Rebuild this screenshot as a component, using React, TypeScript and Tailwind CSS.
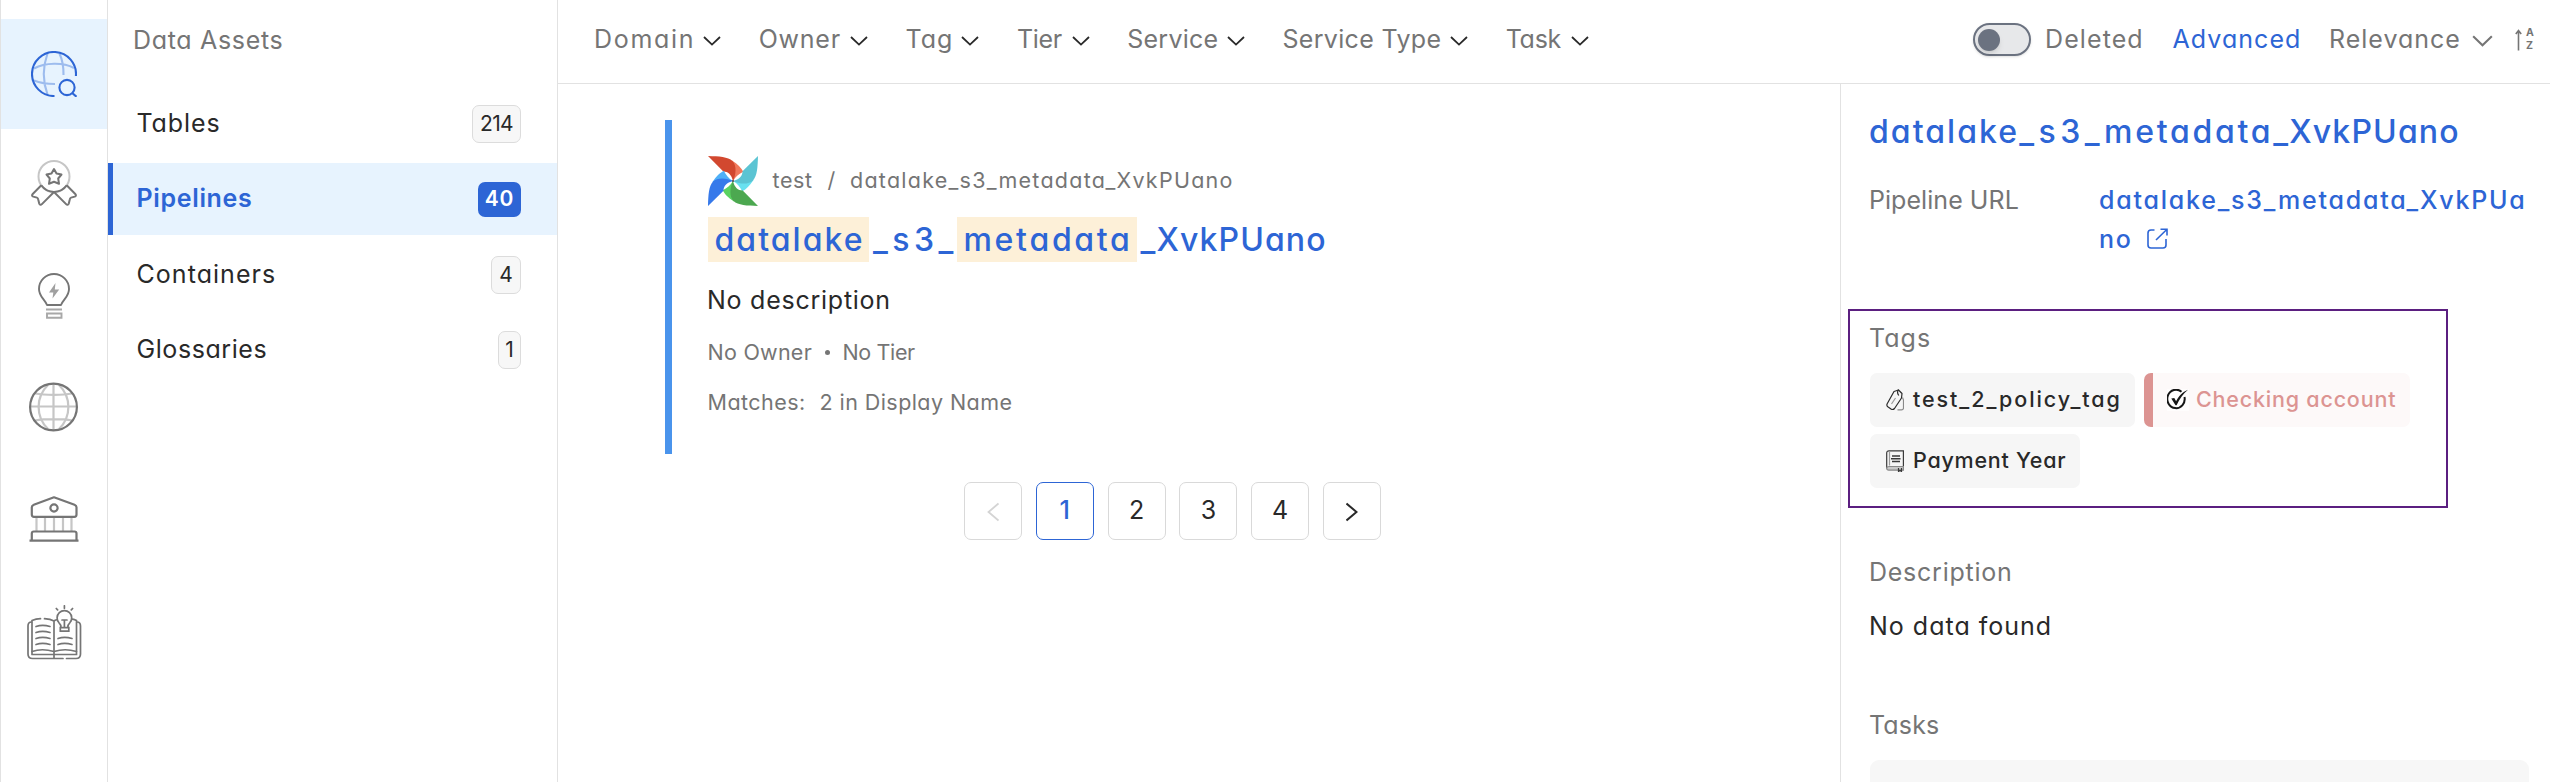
import type { ReactNode } from "react";

const Chevron = ({ className }: { className: string }) => (
  <svg viewBox="0 0 18 10" fill="none" stroke="currentColor" strokeWidth="1.8" className={className}>
    <path d="M1 1l8 7.6L17 1" />
  </svg>
);

const ExploreIcon = () => (
  <svg width="46" height="46" viewBox="0 0 46 46" fill="none" strokeWidth="2.1">
    <g stroke="#9dbcee">
      <path d="M16.5 2.5C12 15 11.500 30 16.500 43.500M28.500 2.500C31 8 32.700 15 32.500 24M3 17.500C14 11.500 32 11 43 17M3 29.500C9 32 17 33 24 33" />
    </g>
    <g stroke="#2d65d5">
      <path d="M44.900 25A22 22 0 1 0 23.500 45" />
      <circle cx="36" cy="36.500" r="7.600" />
      <path d="M41.200 42l4.300 3.800" />
    </g>
  </svg>
);

const QualityIcon = () => (
  <svg width="46" height="46" viewBox="0 0 46 46" fill="none" stroke="#757575" strokeWidth="2" strokeLinejoin="round">
    <circle cx="23" cy="16.500" r="15.500" stroke="#c6c6c6" />
    <path d="M10.300 25.300A15.500 15.500 0 0 0 35.700 25.300" />
    <path d="M10.300 25.300L1.500 34.200c-.8 1.200-.4 2 .8 2.400l3.600 1c1.200.4 1.200 1.200 1.400 2.200l.9 3.800c.4 1.400 1.700 1.600 2.700.5L23 32l12.100 12.100c1 1.100 2.300.9 2.700-.5l.9-3.800c.2-1 .2-1.800 1.400-2.200l3.600-1c1.200-.4 1.600-1.200.8-2.400L35.700 25.300" />
    <path d="M23 9l2.500 4.500 5 1-3.300 4 .8 5.300-5-2-5 2 .8-5.300-3.300-4 5-1z" />
  </svg>
);

const InsightsIcon = () => (
  <svg width="32" height="48" viewBox="0 0 32 48" fill="none" stroke="#757575" strokeWidth="1.900" className="mt-[2px]">
    <path d="M9 33C6 26 1 24.500 1 17a15 15 0 0 1 30 0c0 7.500-5 9-8 16z" strokeLinejoin="round" />
    <g stroke="#a8a8a8">
      <path d="M8 37.500h16M9 41.500h14.500v4.300H9z" />
    </g>
    <path d="M17.500 11L11 20.500h4.300L14.500 26.500 21.200 17.500h-4.400z" fill="#a0a0a0" stroke="none" />
  </svg>
);

const DomainIcon = () => (
  <svg width="50" height="50" viewBox="0 0 50 50" fill="none" strokeWidth="2.200">
    <g stroke="#c6c6c6">
      <path d="M24.500 2v46M2 24.500h46M6 11.500c10 1.800 28 1.800 37 0M6 38.500c10-1.800 28-1.800 37 0" />
      <path d="M19 3C6.500 15 6.500 35 19 47M30 3C42.500 15 42.500 35 30 47" />
    </g>
    <circle cx="24.500" cy="25" r="23.400" stroke="#757575" />
  </svg>
);

const GovernIcon = () => (
  <svg width="50" height="46" viewBox="0 0 50 46" fill="none" stroke="#757575" strokeWidth="2.200" strokeLinejoin="round">
    <path d="M7.500 21v14M16 21v14M25 21v14M34 21v14M42.500 21v14" stroke="#c6c6c6" />
    <path d="M25 1.300L45.500 8.700q2 .8 2 2.600V18.500q0 2.300-2.200 2.300H5q-2.200 0-2.200-2.300V11.300q0-1.800 2-2.600z" />
    <circle cx="25" cy="12" r="3.600" />
    <path d="M2.800 44V37.500q0-2 2-2h40.700q2 0 2 2V44" />
    <path d="M.5 44.700h49" />
  </svg>
);

const GlossaryIcon = () => (
  <svg width="55" height="56" viewBox="0 0 55 56" fill="none" stroke="#757575" strokeWidth="1.700" strokeLinecap="round" className="mt-[3px]">
    <path d="M4.500 17q-3.500 0-3.500 4v28q0 4.500 4.500 4.500h30.500M39.500 53.500h9.500q4.500 0 4.500-4.500V21q0-4-3.500-4" />
    <path d="M5 49.500V15.500q4-1.800 8.500-1.800M17.500 13.700q6 .3 9.500 2.300V53M5 49.500h44.500V15.500q-2-1-4-1.300M27 16q1-.8 2.500-1.200" />
    <path d="M5 46.500q10-3.500 22 0 11-3.500 22.500 0" />
    <path d="M9 21.500q6.500-2.300 14 0M9 27.500q6.500-2.300 14 0M9 33.500q6.500-2.300 14 0M9 39.500q6.500-2.300 14 0M31 33.500q6.500-2.300 14 0M31 39.500q6.500-2.300 14 0" />
    <path d="M34 22.500q0-3-2-4.700a7.300 7.300 0 1 1 10.800 0q-2 1.700-2 4.700M33.300 22.700h8.500v3.500h-8.500zM35 15h5M37.400 15v7" />
    <path d="M37.400 .8v2.500M29.300 3.500l1.300 1.400M45.600 3.500l-1.300 1.400" />
  </svg>
);

const blades = [
  { turn: "rotate(0 25 25)", main: "#d2482f", fold: "#f0795c" },
  { turn: "rotate(90 25 25)", main: "#5bc4d3", fold: "#68e1f0" },
  { turn: "rotate(180 25 25)", main: "#4ca850", fold: "#5bd260" },
  { turn: "rotate(270 25 25)", main: "#3679ea", fold: "#4fb0f7" },
];

const AirflowLogo = () => (
  <svg width="50" height="50" viewBox="0 0 50 50" className="shrink-0">
    {blades.map((b) => (
      <g key={b.turn} transform={b.turn}>
        <path d="M24 4.500C30 8.500 33 11.500 35.300 15.800 31 18 27.500 20.500 25 25z" fill={b.fold} />
        <path d="M0 0C11 .3 20 .8 24.500 5 29 9.500 28 19 25 25 23.500 18.500 20 15.500 15.300 15.500z" fill={b.main} />
      </g>
    ))}
    <circle cx="25" cy="25" r="1" fill="#444" />
  </svg>
);

const SortIcon = () => (
  <div className="flex h-[24px] w-[19px] items-center text-[#757575]">
    <svg width="7" height="22" viewBox="0 0 7 22" className="shrink-0">
      <path d="M3.500 21.500V2M.8 5L3.500 1.500 6.200 5" fill="none" stroke="currentColor" strokeWidth="1.600" />
    </svg>
    <span className="ml-[4px] flex flex-col text-[10.500px] leading-[12.500px] font-bold">
      <span>A</span>
      <span>Z</span>
    </span>
  </div>
);

const ExternalIcon = () => (
  <svg width="21" height="21" viewBox="0 0 21 21" fill="none" stroke="currentColor" strokeWidth="1.600" className="ml-[14px] inline-block align-[-1px]">
    <path d="M7.500 2H4Q1 2 1 5v12q0 3 3 3h12q3 0 3-3v-6" />
    <path d="M9 12L20 1.200M13.500 1.200H20V7.500" />
  </svg>
);

const TagIcon = () => (
  <svg width="18" height="22" viewBox="0 0 18 22" fill="none" stroke="#2b2b2b" strokeWidth="1.200" strokeLinejoin="round" className="shrink-0">
    <path d="M8 2.500L12.500 1 16 4.500 15.500 9 8.500 19.500Q7 21.200 5 20L1.800 17.700Q.3 16.500 1.200 14.700z" />
    <path d="M12.500 .5q-2 3 .3 6" />
    <path d="M9.500 9L5.500 15" stroke="#9a9a9a" />
    <path d="M16.500 8.500l1 2.500V19q0 1.800-2 1.800h-4" stroke="#8a8a8a" />
  </svg>
);

const CheckIcon = () => (
  <svg width="22" height="22" viewBox="0 0 22 22" fill="none" stroke="#161616" className="shrink-0 bg-white/70">
    <path d="M14.500 2.800A8.700 9.200 0 1 0 17.500 8" strokeWidth="2" />
    <path d="M4.300 9.500l3-.5 1.800 3.200C11.500 7.500 15.500 3 21 .8 16 5 12.500 10 9.600 16.300H8.500z" fill="#161616" stroke="none" />
  </svg>
);

const BookIcon = () => (
  <svg width="18" height="22" viewBox="0 0 18 22" fill="none" stroke="#3a3a3a" strokeWidth="1.200" className="shrink-0">
    <path d="M3.500 16.500H17.400V.8H3Q.7 .8 .7 3v15.200" />
    <path d="M.7 18.200q0-1.700 2.800-1.700h13.900v3.700H2.700q-2 0-2-2z" fill="#c9c9c9" stroke="#8a8a8a" />
    <path d="M3.500 1.500v14" stroke="#9a9a9a" />
    <path d="M6 6h8M5 8.800h9.500M6 11.600h8" strokeWidth="1.500" />
    <path d="M12.500 18v3.500l1.500-1.200 1.500 1.200V18" />
  </svg>
);

const NavCell = ({ children }: { children: ReactNode }) => (
  <div className="flex h-[112px] items-center justify-center">{children}</div>
);

const filters = [
  { label: "Domain", cls: "w-[109px] tracking-[1.7px]" },
  { label: "Owner", cls: "w-[91px] tracking-[0.77px]" },
  { label: "Tag", cls: "w-[56px] tracking-[1.1px]" },
  { label: "Tier", cls: "w-[54.500px] tracking-[-0.39px]" },
  { label: "Service", cls: "w-[99.500px] tracking-[0.25px]" },
  { label: "Service Type", cls: "w-[167.500px] tracking-[0.33px]" },
  { label: "Task", cls: "w-[65.400px] tracking-[-0.23px]" },
];

const assets = [
  { label: "Tables", count: "214", cls: "tracking-[0.91px]", badge: "w-[49px] tracking-[-0.6px]" },
  { label: "Pipelines", count: "40", cls: "tracking-[0.66px]", badge: "w-[43px] tracking-[0.8px]", active: true },
  { label: "Containers", count: "4", cls: "tracking-[1.05px]", badge: "w-[30px]" },
  { label: "Glossaries", count: "1", cls: "tracking-[0.57px]", badge: "w-[23px]" },
];

const pageBox = "flex h-[58px] w-[58px] items-center justify-center rounded-[7px] border";

export default function App() {
  return (
    <div className="flex h-[782px] w-[2550px] overflow-hidden bg-white font-['Inter',sans-serif] text-[25px] text-[#292929] [font-feature-settings:'cv11']">
      <nav className="w-[108px] shrink-0 border-x border-[#e2e2e2] pt-[19px]">
        <div className="flex h-[110px] items-center justify-center bg-[#e7f3fe]">
          <ExploreIcon />
        </div>
        <div className="-mt-[2px]">
          <NavCell><QualityIcon /></NavCell>
          <NavCell><InsightsIcon /></NavCell>
          <NavCell><DomainIcon /></NavCell>
          <NavCell><GovernIcon /></NavCell>
          <NavCell><GlossaryIcon /></NavCell>
        </div>
      </nav>

      <aside className="w-[450px] shrink-0 border-r border-[#e2e2e2]">
        <h2 className="h-[87.500px] pl-[25px] leading-[81px] tracking-[0.68px] text-[#757575]">Data Assets</h2>
        <ul className="flex flex-col gap-[3.500px]">
          {assets.map((a) => (
            <li
              key={a.label}
              className={
                a.active
                  ? "flex h-[72px] items-center justify-between border-l-[5px] border-[#2d65d5] bg-[#e7f3fe] pr-9 pl-[23.500px] font-semibold text-[#2d65d5]"
                  : "flex h-[72px] items-center justify-between pr-9 pl-[28.500px]"
              }
            >
              <span className={a.cls}>{a.label}</span>
              <span
                className={
                  (a.active
                    ? "flex h-[35px] items-center justify-center rounded-[7px] bg-[#2d65d5] text-[21px] text-white "
                    : "flex h-[38px] items-center justify-center rounded-[7px] border border-[#dcdcdc] bg-[#f7f7f7] text-[21px] ") + a.badge
                }
              >
                {a.count}
              </span>
            </li>
          ))}
        </ul>
      </aside>

      <div className="flex min-w-0 flex-1 flex-col">
        <header className="flex h-[84px] shrink-0 border-b border-[#e2e2e2] pr-4 pl-[36px] text-[#757575]">
          <div className="flex h-[79px] items-center gap-[37.700px] whitespace-nowrap">
            {filters.map((f) => (
              <button key={f.label} className="flex items-center">
                <span className={"text-left " + f.cls}>{f.label}</span>
                <Chevron className="mt-[2px] h-[10px] w-[18px] text-[#292929]" />
              </button>
            ))}
          </div>
          <div className="ml-auto flex h-[79px] items-center whitespace-nowrap">
            <span className="flex h-[33px] w-[58px] items-center rounded-full border-2 border-[#6b7280] bg-[#e7e8ea] pl-[3px] shadow-sm">
              <span className="h-[22px] w-[22px] rounded-full bg-[#6b7280] shadow-md" />
            </span>
            <span className="ml-[14px] w-[127.500px] tracking-[1.1px]">Deleted</span>
            <span className="w-[156.500px] tracking-[1.05px] text-[#2d65d5]">Advanced</span>
            <span className="w-[143px] tracking-[1px]">Relevance</span>
            <Chevron className="mt-[2px] h-[12px] w-[21px]" />
            <span className="ml-[22px]"><SortIcon /></span>
          </div>
        </header>

        <div className="flex min-h-0 flex-1">
          <main className="flex-1 pt-9 pl-[107px]">
            <article className="h-[334px] border-l-[7px] border-[#4a94ec] pt-9 pl-9">
              <div className="flex h-[50px] items-center text-[21.500px] text-[#757575]">
                <AirflowLogo />
                <span className="ml-[14.500px] w-[55px] pb-px tracking-[0.59px]">test</span>
                <span className="w-[22.500px] pb-px">/</span>
                <span className="pb-px tracking-[1.25px]">datalake_s3_metadata_XvkPUano</span>
              </div>
              <h3 className="mt-[11px] flex h-[45px] items-center text-[32px] leading-[45px] font-medium text-[#2d65d5]">
                <mark className="h-[45px] w-[161px] bg-[#fdf0d8] pl-[6.500px] tracking-[2.05px] text-inherit">datalake</mark>
                <span className="w-[88px] pl-[4px] tracking-[4.5px]">_s3_</span>
                <mark className="h-[45px] w-[180px] bg-[#fdf0d8] pl-[6.500px] tracking-[2.7px] text-inherit">metadata</mark>
                <span className="pl-[3.500px] tracking-[1.1px]">_XvkPUano</span>
              </h3>
              <p className="mt-[17.500px] -ml-px leading-[40px] tracking-[0.75px]">No description</p>
              <div className="mt-4 flex text-[21.500px] leading-[32px] text-[#757575]">
                <span className="-ml-[0.500px] w-[117px] tracking-[0.25px]">No Owner</span>
                <span className="mt-[14.500px] h-[5px] w-[5px] rounded-full bg-[#757575]" />
                <span className="ml-[13px] tracking-[-0.36px]">No Tier</span>
              </div>
              <div className="mt-[18px] flex text-[21.500px] leading-[32px] text-[#757575]">
                <span className="-ml-[0.500px] w-[112px] tracking-[0.46px]">Matches:</span>
                <span className="tracking-[0.43px]">2 in Display Name</span>
              </div>
            </article>
            <div className="mt-7 ml-[299px] flex gap-[13.800px]">
              <span className={pageBox + " border-[#d9d9d9] text-[#d4d4d4]"}>
                <svg width="12" height="20" viewBox="0 0 12 20" fill="none" stroke="currentColor" strokeWidth="1.800" className="mt-[2px]">
                  <path d="M11.500 1.500L1.500 10l10 8.500" />
                </svg>
              </span>
              <span className={pageBox + " border-[#2d65d5] font-medium text-[#2d65d5]"}>1</span>
              <span className={pageBox + " border-[#d9d9d9]"}>2</span>
              <span className={pageBox + " border-[#d9d9d9]"}>3</span>
              <span className={pageBox + " border-[#d9d9d9]"}>4</span>
              <span className={pageBox + " border-[#d9d9d9]"}>
                <svg width="12" height="20" viewBox="0 0 12 20" fill="none" stroke="currentColor" strokeWidth="2" className="mt-[2px]">
                  <path d="M.5 1.500L10.500 10l-10 8.500" />
                </svg>
              </span>
            </div>
          </main>

          <section className="w-[710px] shrink-0 border-l border-[#e2e2e2] pt-6 pl-7 text-[#757575]">
            <h3 className="text-[32px] leading-[48px] font-medium whitespace-nowrap text-[#2d65d5]">
              <span className="tracking-[2.05px]">datalake</span>
              <span className="tracking-[4.5px]">_s3_</span>
              <span className="tracking-[2.7px]">metadata</span>
              <span className="tracking-[1.15px]">_XvkPUano</span>
            </h3>
            <div className="mt-[25px] flex leading-[38.500px]">
              <span className="w-[230px] tracking-[0.05px]">Pipeline URL</span>
              <a className="h-[77px] w-[436px] font-medium tracking-[1.78px] break-all text-[#2d65d5]">
                datalake_s3_metadata_XvkPUano
                <ExternalIcon />
              </a>
            </div>

            <div className="mt-[51px] -ml-[21px] h-[199px] w-[600px] border-2 border-[#5b1f80] pt-2 pl-[19px]">
              <h4 className="leading-[38px] tracking-[1.05px]">Tags</h4>
              <div className="mt-4 ml-px flex flex-wrap gap-x-[9px] gap-y-[7px] text-[21.500px] font-medium text-[#292929]">
                <span className="flex h-[54px] w-[265px] items-center rounded-[7px] bg-[#f6f6f6] pl-4">
                  <TagIcon />
                  <span className="ml-[9px] pb-[2px] tracking-[1.93px]">test_2_policy_tag</span>
                </span>
                <span className="flex h-[54px] w-[266px] items-center rounded-[7px] border-l-[9px] border-[#dc9492] bg-[#fdf9f9] pl-[14px] text-[#dc9492]">
                  <CheckIcon />
                  <span className="ml-[7px] pb-[2px] tracking-[0.8px] whitespace-nowrap">Checking account</span>
                </span>
                <span className="flex h-[54px] w-[210px] items-center rounded-[7px] bg-[#f6f6f6] pl-4">
                  <BookIcon />
                  <span className="ml-[9px] pb-[2px] tracking-[0.75px]">Payment Year</span>
                </span>
              </div>
            </div>

            <h4 className="mt-11 leading-[40px] tracking-[0.75px]">Description</h4>
            <p className="mt-[14px] leading-[40px] tracking-[1px] text-[#292929]">No data found</p>
            <h4 className="mt-[59px] leading-[40px] tracking-[0.15px]">Tasks</h4>
            <div className="mt-[15px] ml-px h-[60px] w-[659px] rounded-[9px] bg-[#f7f7f7]" />
          </section>
        </div>
      </div>
    </div>
  );
}
